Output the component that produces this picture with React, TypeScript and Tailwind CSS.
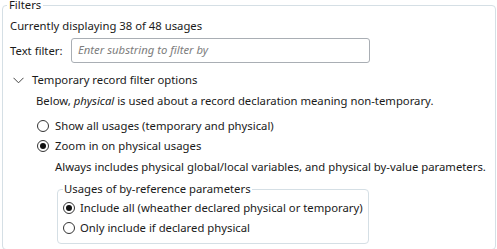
import React from "react";

function Radio({ checked }: { checked?: boolean }) {
  return (
    <span className="flex h-[12px] w-[12px] shrink-0 items-center justify-center rounded-full border border-[#333333] bg-white">
      {checked ? <span className="h-[6px] w-[6px] rounded-full bg-[#111111]" /> : null}
    </span>
  );
}

export default function App() {
  return (
    <div
      className="h-[249px] w-[497px] overflow-hidden whitespace-nowrap bg-white text-[11.3px] text-[#1a1a1a]"
      style={{ fontFamily: '"Noto Sans", "Open Sans", sans-serif' }}
    >
      <fieldset className="ml-[2px] mr-[1px] -mt-[3px] rounded-[4px] border border-[#d5dfe5] pl-[7px] pr-[7px] pb-[5px] pt-0">
        <legend className="ml-[-3px] px-[2px] leading-[16px]">Filters</legend>
        <div className="mt-[3px] flex h-[20px] items-center leading-[20px]">
          Currently displaying 38 of 48 usages
        </div>
        <div className="mt-[2px] flex h-[25px] items-center">
          <span className="w-[61px] leading-[20px]">Text filter:</span>
          <div className="flex h-[25px] w-[299px] items-center rounded-[3px] border border-[#a9aeb4] px-[6px] italic text-[#7d7d7d]">
            Enter substring to filter by
          </div>
        </div>
        <div className="mt-[7px] flex h-[20px] items-center leading-[20px]">
          <span className="ml-[3px] mr-[8px] flex w-[11px] items-center justify-center">
            <svg width="11" height="7" viewBox="0 0 11 7">
              <polyline points="0.5,0.8 5.5,5.8 10.5,0.8" fill="none" stroke="#444444" strokeWidth="1" />
            </svg>
          </span>
          Temporary record filter options
        </div>
        <div className="ml-[26px] mt-[1px] h-[20px] leading-[20px]">
          Below, <span className="italic">physical</span> is used about a record declaration meaning non-temporary.
        </div>
        <div className="ml-[27px] mt-[5px] flex h-[20px] items-center gap-[6px] leading-[20px]">
          <Radio />
          <span>Show all usages (temporary and physical)</span>
        </div>
        <div className="ml-[27px] flex h-[20px] items-center gap-[6px] leading-[20px]">
          <Radio checked />
          <span>Zoom in on physical usages</span>
        </div>
        <div className="ml-[45px] mt-[1px] h-[20px] leading-[20px]">
          Always includes physical global/local variables, and physical by-value parameters.
        </div>
        <fieldset className="ml-[47px] mt-[4px] w-[308px] rounded-[4px] border border-[#d5dfe5] px-[5px] pb-[5px] pt-0">
          <legend className="ml-[0px] px-[1px] leading-[16px]">Usages of by-reference parameters</legend>
          <div className="mt-[1px] flex h-[20px] items-center gap-[5px] leading-[20px]">
            <Radio checked />
            <span>Include all (wheather declared physical or temporary)</span>
          </div>
          <div className="flex h-[20px] items-center gap-[5px] leading-[20px]">
            <Radio />
            <span>Only include if declared physical</span>
          </div>
        </fieldset>
      </fieldset>
    </div>
  );
}
